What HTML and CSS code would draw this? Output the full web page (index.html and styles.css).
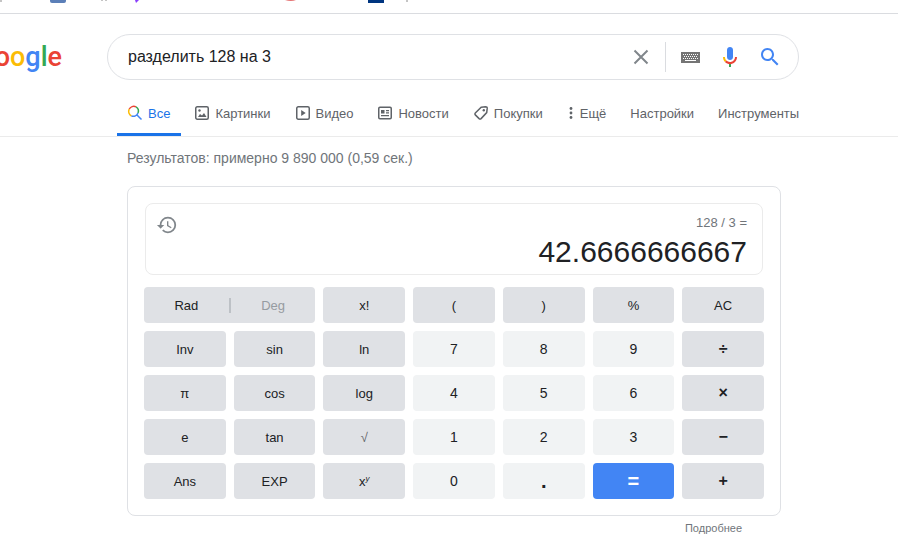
FILE: index.html
```html
<!DOCTYPE html>
<html lang="ru">
<head>
    <meta charset="UTF-8">
    <meta name="viewport" content="width=device-width, initial-scale=1.0">
    <title>разделить 128 на 3 - Google</title>
    <link rel="stylesheet" href="styles.css">
</head>
<body>
    <!-- bottom edge of the bookmarks bar -->
    <div class="bookmarks">
        <svg width="898" height="13" viewBox="0 0 898 13" aria-hidden="true">
            <path d="M1 0v2M102 0v1M106 0v1M407 0v2" stroke="#8a8a8a"/>
            <path d="M50 0h16v1q0 2-2 2H52q-2 0-2-2z" fill="#5b7fb8"/>
            <path d="M135 0h4l-3 3z" fill="#8a3ffc"/>
            <path d="M285 0h11q-5 2-11 0z" fill="#e57373"/>
            <path d="M368 0h16v3h-16z" fill="#003580"/>
        </svg>
    </div>

    <header class="top">
        <a class="logo" href="#" aria-label="Google"><span class="red">o</span><span class="yellow">o</span><span class="blue">g</span><span class="green">l</span><span class="red">e</span></a>
        <form class="search">
            <input type="text" class="query" aria-label="Найти" value="разделить 128 на 3">
            <button type="button" class="icon-btn clear" aria-label="Очистить">
                <svg width="24" height="24" viewBox="0 0 24 24"><path d="M5.500 5.500l13 13M18.500 5.500l-13 13" stroke="#80868b" stroke-width="2" fill="none"/></svg>
            </button>
            <button type="button" class="icon-btn" aria-label="Экранная клавиатура">
                <svg width="19" height="11" viewBox="0 0 19 11"><path d="M0 0h19v11H0z" fill="#757575"/><path d="M2 2.500h15M3 4.500h14M2 6.500h15" stroke="#fff" stroke-dasharray="1 1"/><path d="M4 8.500h11" stroke="#fff"/></svg>
            </button>
            <button type="button" class="icon-btn" aria-label="Голосовой поиск">
                <svg width="24" height="24" viewBox="0 0 24 24"><path fill="#4285f4" d="M12 15c1.700 0 3-1.300 3-3V5c0-1.700-1.300-3-3-3S9 3.300 9 5v7c0 1.700 1.300 3 3 3z"/><path fill="#34a853" d="M11 18h2v4h-2z"/><path fill="#fbbc05" d="M5 12h2c0 1.500.5 2.700 1.400 3.600L7 17c-1.300-1.300-2-3-2-5z"/><path fill="#ea4335" d="M12 17c-1.400 0-2.700-.5-3.600-1.400L7 17c1.300 1.300 3 2.200 5 2.200 3.900 0 7-3.300 7-7.200h-2c0 2.800-2.200 5-5 5z"/></svg>
            </button>
            <button type="submit" class="icon-btn" aria-label="Поиск">
                <svg width="24" height="24" viewBox="0 0 24 24"><path fill="#4285f4" d="M15.500 14h-.79l-.28-.27C15.410 12.590 16 11.110 16 9.500 16 5.910 13.090 3 9.500 3S3 5.910 3 9.500 5.910 16 9.500 16c1.610 0 3.090-.59 4.230-1.570l.27.28v.79l5 4.990L20.490 19l-4.990-5zm-6 0C7.010 14 5 11.990 5 9.500S7.010 5 9.500 5 14 7.010 14 9.500 11.990 14 9.500 14z"/></svg>
            </button>
        </form>
    </header>

    <nav class="tabs">
        <a href="#" class="tab active">
            <svg width="16" height="16" viewBox="0 0 16 16" fill="none" stroke-width="1.500"><path stroke="#ea4335" d="M2.200 4.200A5 5 0 0 1 9 1.900"/><path stroke="#34a853" d="M9 1.900A5 5 0 0 1 11 8"/><path stroke="#fbbc05" d="M2.200 4.200A5 5 0 0 0 4.500 11"/><path stroke="#4285f4" d="M4.500 11A5 5 0 0 0 11 8M10 10l4.500 4.500"/></svg>
            Все
        </a>
        <a href="#" class="tab">
            <svg width="16" height="16" viewBox="0 0 16 16"><rect x="1.750" y="1.750" width="12.500" height="12.500" rx="1.500" fill="none" stroke="#5f6368" stroke-width="1.500"/><path d="M4 12l2-3 2 1.500L10 8l2.500 4z" fill="#5f6368"/><circle cx="5.500" cy="5.500" r="1.200" fill="#5f6368"/></svg>
            Картинки
        </a>
        <a href="#" class="tab">
            <svg width="16" height="16" viewBox="0 0 16 16"><rect x="1.750" y="1.750" width="12.500" height="12.500" rx="1.500" fill="none" stroke="#5f6368" stroke-width="1.500"/><path d="M6.200 5v6l4.500-3z" fill="#5f6368"/></svg>
            Видео
        </a>
        <a href="#" class="tab">
            <svg width="16" height="16" viewBox="0 0 16 16"><rect x="1.750" y="2.250" width="12.500" height="11.500" rx="1.200" fill="none" stroke="#5f6368" stroke-width="1.500"/><path d="M4 5h3.500v3.500H4zM9 5h3v1.300H9zM9 7.300h3v1.300H9zM4 10h8v1.200H4z" fill="#5f6368"/></svg>
            Новости
        </a>
        <a href="#" class="tab">
            <svg width="16" height="16" viewBox="0 0 16 16"><path d="M8.200 2.300l4.300-.6q1.800 0 1.700 1.700l-.5 4.200-5.600 6q-1 .9-2 0L2.300 9.900q-.9-1 0-2z" fill="none" stroke="#5f6368" stroke-width="1.500"/><circle cx="10.800" cy="5.200" r="1.200" fill="#5f6368"/></svg>
            Покупки
        </a>
        <a href="#" class="tab">
            <svg width="8" height="16" viewBox="0 0 8 16" fill="#5f6368"><circle cx="4" cy="3.500" r="1.400"/><circle cx="4" cy="8" r="1.400"/><circle cx="4" cy="12.500" r="1.400"/></svg>
            Ещё
        </a>
        <a href="#" class="tab">Настройки</a>
        <a href="#" class="tab">Инструменты</a>
    </nav>

    <main class="results">
        <p class="stats">Результатов: примерно 9 890 000 (0,59 сек.)</p>

        <section class="calc">
            <div class="display">
                <button type="button" class="history" aria-label="История">
                    <svg width="22" height="22" viewBox="0 0 24 24"><path fill="#80868b" d="M13 3a9 9 0 0 0-9 9H1l3.890 3.890.07.14L9 12H6c0-3.870 3.130-7 7-7s7 3.130 7 7-3.130 7-7 7c-1.930 0-3.680-.79-4.940-2.060l-1.420 1.420A8.950 8.950 0 0 0 13 21a9 9 0 0 0 0-18zm-1 5v5l4.280 2.540.72-1.210-3.500-2.080V8H12z"/></svg>
                </button>
                <div class="output">
                    <div class="expression">128 / 3 =</div>
                    <div class="answer">42.6666666667</div>
                </div>
            </div>

            <div class="keys">
                <div class="key angle">
                    <button type="button">Rad</button>
                    <button type="button" class="off">Deg</button>
                </div>
                <button type="button" class="key">x!</button>
                <button type="button" class="key">(</button>
                <button type="button" class="key">)</button>
                <button type="button" class="key">%</button>
                <button type="button" class="key">AC</button>

                <button type="button" class="key">Inv</button>
                <button type="button" class="key">sin</button>
                <button type="button" class="key">ln</button>
                <button type="button" class="key num">7</button>
                <button type="button" class="key num">8</button>
                <button type="button" class="key num">9</button>
                <button type="button" class="key op">÷</button>

                <button type="button" class="key">π</button>
                <button type="button" class="key">cos</button>
                <button type="button" class="key">log</button>
                <button type="button" class="key num">4</button>
                <button type="button" class="key num">5</button>
                <button type="button" class="key num">6</button>
                <button type="button" class="key op">×</button>

                <button type="button" class="key">e</button>
                <button type="button" class="key">tan</button>
                <button type="button" class="key root">√</button>
                <button type="button" class="key num">1</button>
                <button type="button" class="key num">2</button>
                <button type="button" class="key num">3</button>
                <button type="button" class="key op">−</button>

                <button type="button" class="key">Ans</button>
                <button type="button" class="key">EXP</button>
                <button type="button" class="key"><span>x<sup>y</sup></span></button>
                <button type="button" class="key num">0</button>
                <button type="button" class="key num dot">.</button>
                <button type="button" class="key equals">=</button>
                <button type="button" class="key op">+</button>
            </div>
        </section>
        <a href="#" class="details">Подробнее</a>
    </main>
</body>
</html>
```

FILE: styles.css
```css
body {
    margin: 0;
    font-family: "Liberation Sans", Arial, sans-serif;
    color: #202124;
    background: #fff;
}
a {
    text-decoration: none;
}
button {
    padding: 0;
    border: none;
    background: none;
    font-family: inherit;
    color: inherit;
    cursor: pointer;
}
svg {
    display: block;
    flex: none;
}

.bookmarks {
    height: 13px;
    border-bottom: 1px solid #dadce0;
    overflow: hidden;
}

/* search bar */
.top {
    display: flex;
    align-items: center;
    padding: 20px 99px 0 0;
}
.logo {
    display: flex;
    justify-content: flex-end;
    flex: none;
    width: 62px;
    margin-right: 45px;
    font-family: Roboto, sans-serif;
    font-size: 27px;
    font-weight: 500;
    line-height: 44px;
}
.red { color: #ea4335; }
.yellow { color: #fbbc05; }
.blue { color: #4285f4; }
.green { color: #34a853; }
.search {
    display: flex;
    align-items: center;
    flex: 1;
    height: 44px;
    padding: 0 8px 0 20px;
    border: 1px solid #dfe1e5;
    border-radius: 24px;
}
.query {
    flex: 1;
    min-width: 0;
    padding: 0;
    border: none;
    outline: none;
    background: none;
    font-family: inherit;
    font-size: 16px;
    color: #202124;
}
.icon-btn {
    display: flex;
    align-items: center;
    justify-content: center;
    width: 40px;
    height: 30px;
}
.clear {
    width: 49px;
    margin-right: 4px;
    border-right: 1px solid #dadce0;
}

/* tabs */
.tabs {
    display: flex;
    gap: 24px;
    height: 56px;
    padding-left: 117px;
    border-bottom: 1px solid #ebebeb;
}
.tab {
    display: flex;
    align-items: center;
    gap: 5px;
    padding-top: 13px;
    border-bottom: 3px solid transparent;
    box-sizing: border-box;
    font-size: 13px;
    color: #5f6368;
}
.tab.active {
    padding-left: 10px;
    padding-right: 11px;
    margin-right: -11px;
    color: #1a73e8;
    border-bottom-color: #1a73e8;
}

/* results */
.results {
    display: flex;
    flex-direction: column;
    max-width: 654px;
    margin-left: 127px;
}
.stats {
    margin: 0;
    font-size: 14px;
    line-height: 43px;
    color: #70757a;
}
.calc {
    margin-top: 6px;
    padding: 16px;
    border: 1px solid #dfe1e5;
    border-radius: 8px;
}
.display {
    display: flex;
    justify-content: space-between;
    align-items: flex-start;
    height: 70px;
    margin: 0 1px;
    padding: 0 15px 0 10px;
    border: 1px solid #ebebeb;
    border-radius: 8px;
}
.history {
    padding-top: 10px;
}
.output {
    padding-top: 10px;
    text-align: right;
}
.expression {
    font-size: 13px;
    line-height: 18px;
    color: #70757a;
}
.answer {
    font-size: 30px;
    line-height: 40px;
}
.keys {
    display: grid;
    grid-template-columns: repeat(7, 1fr);
    gap: 8px;
    margin-top: 12px;
}
.key {
    display: flex;
    align-items: center;
    justify-content: center;
    height: 36px;
    border-radius: 4px;
    background: #dfe1e5;
    font-size: 13px;
}
.num {
    background: #f1f3f4;
    font-size: 14px;
}
.op {
    font-size: 16px;
    font-weight: bold;
}
.root {
    color: #5f6368;
}
.dot {
    font-size: 20px;
    font-weight: bold;
}
.equals {
    background: #4285f4;
    font-size: 20px;
    font-weight: bold;
    color: #fff;
}
.key sup {
    font-size: 8px;
    font-style: italic;
    line-height: 0;
}
.angle {
    grid-column: span 2;
}
.angle button {
    flex: 1;
    font-size: 13px;
}
.angle .off {
    border-left: 2px solid #bdc1c6;
    color: #969ba1;
}
.details {
    align-self: flex-end;
    margin-right: 39px;
    font-size: 11px;
    line-height: 20px;
    padding-top: 2px;
    color: #70757a;
}
```
